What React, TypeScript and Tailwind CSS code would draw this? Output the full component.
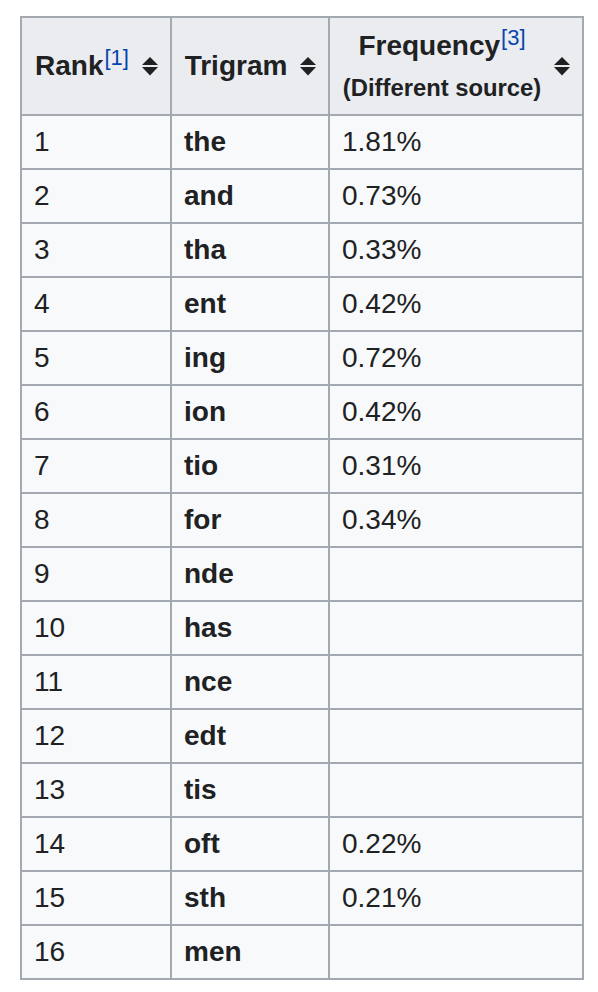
import React from 'react'

const rows: [string, string, string][] = [
  ['1', 'the', '1.81%'],
  ['2', 'and', '0.73%'],
  ['3', 'tha', '0.33%'],
  ['4', 'ent', '0.42%'],
  ['5', 'ing', '0.72%'],
  ['6', 'ion', '0.42%'],
  ['7', 'tio', '0.31%'],
  ['8', 'for', '0.34%'],
  ['9', 'nde', ''],
  ['10', 'has', ''],
  ['11', 'nce', ''],
  ['12', 'edt', ''],
  ['13', 'tis', ''],
  ['14', 'oft', '0.22%'],
  ['15', 'sth', '0.21%'],
  ['16', 'men', ''],
]

function SortIcon() {
  return (
    <svg width="16" height="19" viewBox="0 0 16 19" className="shrink-0">
      <path d="M8 0 L16 8 L0 8 Z" fill="#202122" />
      <path d="M0 10 L16 10 L8 18.5 Z" fill="#202122" />
    </svg>
  )
}

function Ref({ n }: { n: number }) {
  return <span className="text-[22px] font-normal text-[#0645ad] align-super leading-none ml-[1px]">[{n}]</span>
}

function HeadCell({ width, children }: { width?: string; children: React.ReactNode }) {
  return (
    <th className={`${width ?? ''} border-2 border-[#a2a9b1] px-3 font-bold align-middle whitespace-nowrap`}>
      <div className="flex items-center gap-[12px]">
        <div className="flex-1 text-center">{children}</div>
        <SortIcon />
      </div>
    </th>
  )
}

export default function App() {
  return (
    <div className="min-h-screen bg-white pt-[16px] pl-[20px]" style={{ fontFamily: '"Liberation Sans", Arial, sans-serif' }}>
      <table className="border-collapse table-fixed w-[564px] text-[28px] text-[#202122]">
        <thead>
          <tr className="h-[98px] bg-[#eaecf0]">
            <HeadCell width="w-[150px]">
              Rank<Ref n={1} />
            </HeadCell>
            <HeadCell width="w-[158px]">Trigram</HeadCell>
            <HeadCell>
              <div className="leading-[44px]">Frequency<Ref n={3} /></div>
              <div className="text-[23.8px] leading-[40px]">(Different source)</div>
            </HeadCell>
          </tr>
        </thead>
        <tbody>
          {rows.map(([rank, tri, freq]) => (
            <tr key={rank} className="h-[54px] bg-[#f8f9fa]">
              <td className="border-2 border-[#a2a9b1] px-3 align-middle leading-none">{rank}</td>
              <td className="border-2 border-[#a2a9b1] px-3 align-middle leading-none font-bold">{tri}</td>
              <td className="border-2 border-[#a2a9b1] px-3 align-middle leading-none">{freq}</td>
            </tr>
          ))}
        </tbody>
      </table>
    </div>
  )
}
